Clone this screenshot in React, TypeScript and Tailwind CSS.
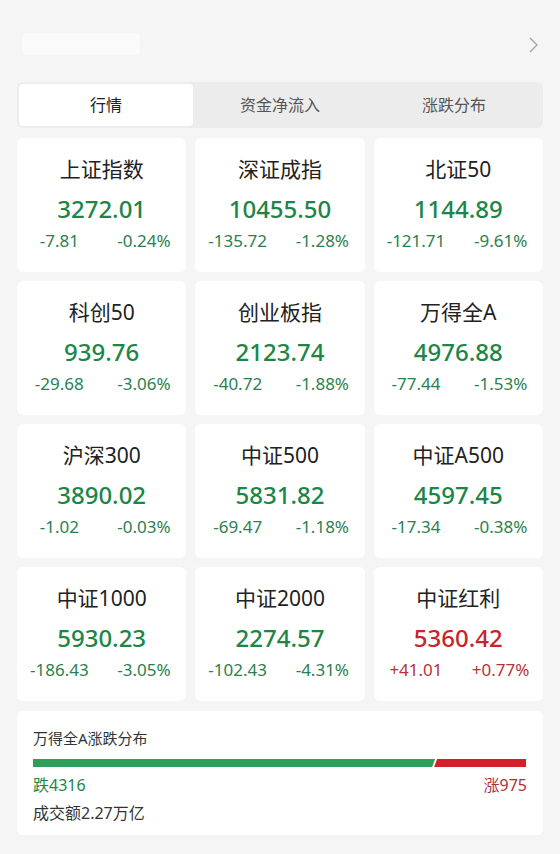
import React from "react";

const FONT = { fontFamily: '"Noto Sans", "Noto Sans CJK SC", sans-serif' };

type Quote = {
  name: string;
  value: string;
  change: string;
  pct: string;
  up?: boolean;
};

const quotes: Quote[] = [
  { name: "上证指数", value: "3272.01", change: "-7.81", pct: "-0.24%" },
  { name: "深证成指", value: "10455.50", change: "-135.72", pct: "-1.28%" },
  { name: "北证50", value: "1144.89", change: "-121.71", pct: "-9.61%" },
  { name: "科创50", value: "939.76", change: "-29.68", pct: "-3.06%" },
  { name: "创业板指", value: "2123.74", change: "-40.72", pct: "-1.88%" },
  { name: "万得全A", value: "4976.88", change: "-77.44", pct: "-1.53%" },
  { name: "沪深300", value: "3890.02", change: "-1.02", pct: "-0.03%" },
  { name: "中证500", value: "5831.82", change: "-69.47", pct: "-1.18%" },
  { name: "中证A500", value: "4597.45", change: "-17.34", pct: "-0.38%" },
  { name: "中证1000", value: "5930.23", change: "-186.43", pct: "-3.05%" },
  { name: "中证2000", value: "2274.57", change: "-102.43", pct: "-4.31%" },
  { name: "中证红利", value: "5360.42", change: "+41.01", pct: "+0.77%", up: true },
];

const tabs = ["行情", "资金净流入", "涨跌分布"];

function ChevronRight() {
  return (
    <svg width="12" height="18" viewBox="0 0 12 18" fill="none">
      <path d="M3 2l7 7-7 7" stroke="#a3a3a3" strokeWidth="1.3" />
    </svg>
  );
}

function QuoteCard({ q }: { q: Quote }) {
  const color = q.up ? "text-[#c8242c]" : "text-[#1d8547]";
  const small = q.up ? "text-[#b8323a]" : "text-[#2c8050]";
  return (
    <div className="bg-white rounded-md h-[134px] flex flex-col items-center pt-[16px]">
      <p className="text-[21px] leading-[30px] text-[#222]">{q.name}</p>
      <p className={`text-[24px] leading-[30px] mt-[10px] font-medium ${color}`}>{q.value}</p>
      <div className={`flex w-full mt-[5px] text-[17px] leading-[24px] ${small}`}>
        <span className="flex-1 text-center">{q.change}</span>
        <span className="flex-1 text-center">{q.pct}</span>
      </div>
    </div>
  );
}

export default function App() {
  const down = 4316;
  const up = 975;
  const downPct = (down / (down + up)) * 100;
  return (
    <div className="min-h-[854px] w-[560px] bg-[#f5f5f5] px-[17px]" style={FONT}>
      {/* Header */}
      <div className="h-[82px] flex items-center justify-between">
        <div className="w-[118px] h-[22px] ml-[5px] mt-[6px] rounded bg-white/50" />
        <div className="mr-[4px] mt-[8px]">
          <ChevronRight />
        </div>
      </div>

      {/* Tabs */}
      <div className="flex h-[46px] bg-[#ececec] rounded-md p-[2px]">
        {tabs.map((t, i) => (
          <div
            key={t}
            className={`flex-1 flex items-center justify-center rounded text-[16px] ${
              i === 0 ? "bg-white text-[#222]" : "text-[#555]"
            }`}
          >
            {t}
          </div>
        ))}
      </div>

      {/* Quote grid */}
      <div className="grid grid-cols-3 gap-x-[9px] gap-y-[9px] mt-[10px]">
        {quotes.map((q) => (
          <QuoteCard key={q.name} q={q} />
        ))}
      </div>

      {/* Distribution */}
      <div className="bg-white rounded-md mt-[10px] h-[124px] px-[16px] pt-[16px]">
        <p className="text-[15px] leading-[22px] text-[#333]">万得全A涨跌分布</p>
        <div className="flex h-[8px] mt-[10px] mr-[1px]">
          <div
            className="h-full bg-[#2e9e5b] [clip-path:polygon(0_0,100%_0,calc(100%-3px)_100%,0_100%)]"
            style={{ width: `${downPct}%` }}
          />
          <div className="h-full flex-1 -ml-[1px] bg-[#d0222a] [clip-path:polygon(3px_0,100%_0,100%_100%,0_100%)]" />
        </div>
        <div className="flex justify-between mt-[7px] text-[16px] leading-[22px]">
          <span className="text-[#1d8547]">跌4316</span>
          <span className="text-[#b0303a]">涨975</span>
        </div>
        <p className="text-[16px] leading-[22px] mt-[6px] text-[#333]">成交额2.27万亿</p>
      </div>
    </div>
  );
}
